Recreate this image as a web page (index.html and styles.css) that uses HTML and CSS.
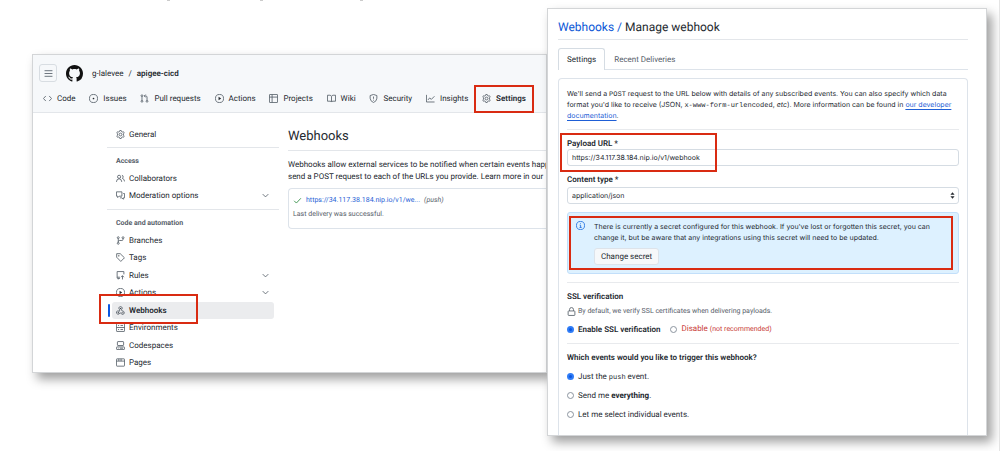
FILE: index.html
```
<!DOCTYPE html>
<html lang="en">
<head>
<meta charset="utf-8">
<title>Manage webhook</title>
<link rel="stylesheet" href="styles.css">
</head>
<body>
<svg class="defs" aria-hidden="true">
  <symbol id="menu" viewBox="0 0 16 16"><path d="M1 3h14M1 8h14M1 13h14"/></symbol>
  <symbol id="code" viewBox="0 0 16 16"><path d="M5 3.500L.8 8 5 12.500M11 3.500L15.200 8 11 12.500"/></symbol>
  <symbol id="issue" viewBox="0 0 16 16"><circle cx="8" cy="8" r="7.200"/><circle class="solid" cx="8" cy="8" r="1.500"/></symbol>
  <symbol id="pull" viewBox="0 0 16 16"><circle cx="3.500" cy="3" r="1.600"/><circle cx="3.500" cy="13" r="1.600"/><circle cx="12.500" cy="13" r="1.600"/><path d="M3.500 4.700v6.600M12.500 11.300V5.500q0-2-2-2H8M10 1L7.500 3.500 10 6"/></symbol>
  <symbol id="play" viewBox="0 0 16 16"><circle cx="8" cy="8" r="7.200"/><path class="solid" d="M6.300 5v6l4.700-3z"/></symbol>
  <symbol id="table" viewBox="0 0 16 16"><rect x=".8" y=".8" width="14.400" height="14.400" rx="1"/><path d="M.8 5.500h14.400M5.500.8v14.400"/></symbol>
  <symbol id="book" viewBox="0 0 16 16"><path d="M8 4q-1-1.800-3-1.800H.8v10.600H5.500q1.800 0 2.500 1.500.7-1.500 2.500-1.500h4.700V2.200H11Q9 2.200 8 4v10"/></symbol>
  <symbol id="shield" viewBox="0 0 16 16"><path d="M8 .8L14 2.800V7.500q0 5-6 7.700-6-2.700-6-7.700V2.800zM8 4.500v4M8 10.200v1.500"/></symbol>
  <symbol id="graph" viewBox="0 0 16 16"><path d="M.8 1.500v12.700h14.400M3.500 10.500L6.500 7l3 2.500L15 4"/></symbol>
  <symbol id="gear" viewBox="0 0 16 16"><path d="M6.800.8h2.400l.6 2 1.400.8 2-.6 1.400 2.200-1.400 1.600v2.400l1.400 1.600-1.400 2.200-2-.6-1.400.8-.6 2H6.800l-.6-2-1.400-.8-2 .6-1.400-2.200 1.400-1.600V6.800L1.400 5.200 2.800 3l2 .6 1.400-.8z"/><circle cx="8" cy="8" r="2.500"/></symbol>
  <symbol id="people" viewBox="0 0 16 16"><circle cx="5.500" cy="5" r="2.800"/><path d="M.8 14q.3-5.500 4.700-5.500T10.200 14M10.500 2.300q2.500.3 2.300 3.200-.3 1.500-1.600 2.200 3.600 1 4 5.500"/></symbol>
  <symbol id="comments" viewBox="0 0 16 16"><path d="M.8 1.500h9.700v7.700H5.500L3 11.700V9.200H.8zM12.800 4.500h2.400v7.700H13v2.500l-2.500-2.500H7"/></symbol>
  <symbol id="branch" viewBox="0 0 16 16"><circle cx="4" cy="3" r="1.700"/><circle cx="4" cy="13" r="1.700"/><circle cx="12.500" cy="3" r="1.700"/><path d="M4 4.700v6.600M12.500 4.700V6q0 2-2 2H6q-2 0-2 2"/></symbol>
  <symbol id="tag" viewBox="0 0 16 16"><path d="M1.200 1.200h6.300l7.500 7.300-6.500 6.500L1.200 7.500z"/><circle class="solid" cx="5" cy="5" r="1.200"/></symbol>
  <symbol id="rules" viewBox="0 0 16 16"><path d="M14 6V1H2v11.200q0 1 1 1h4M2 11h5M11.500 15V8.500M9 11l2.500-2.700L14 11M4 13.200V15"/></symbol>
  <symbol id="hook" viewBox="0 0 16 16"><path d="M5.500 5.500a3 3 0 1 1 5 .2M5.500 5.500L7 7l-3 5M5 8.800a3 3 0 1 0 1.700 3.700H11M8.200 4l2.900 5a3 3 0 1 1-1.500 5.100"/><circle class="solid" cx="8" cy="4" r="1"/><circle class="solid" cx="4" cy="12" r="1"/><circle class="solid" cx="12.200" cy="12" r="1"/></symbol>
  <symbol id="server" viewBox="0 0 16 16"><rect x=".8" y="1" width="14.400" height="14" rx="1"/><path d="M.8 8h14.400M3.500 4.500h2M8 4.500h4.500M3.500 11.500h2M8 11.500h4.500"/></symbol>
  <symbol id="codespace" viewBox="0 0 16 16"><rect x="2.500" y="1" width="11" height="7" rx="1"/><rect x=".8" y="10.500" width="14.400" height="4.500" rx="1"/><path d="M3.500 12.800h1M7 12.800h5.500"/></symbol>
  <symbol id="browser" viewBox="0 0 16 16"><rect x=".8" y="1.500" width="14.400" height="13" rx="1"/><path d="M.8 5.500h14.400M5 1.500v4M9 1.500v4"/></symbol>
  <symbol id="chevron" viewBox="0 0 16 16"><path d="M3 5.500L8 10.500l5-5"/></symbol>
  <symbol id="check" viewBox="0 0 16 16"><path d="M2 8.500L6 12.500 14 4"/></symbol>
  <symbol id="info" viewBox="0 0 16 16"><circle cx="8" cy="8" r="7.200"/><path d="M6.500 7.300H8.200v4.200M6.300 11.500h3.700M8 4v1.200"/></symbol>
  <symbol id="lock" viewBox="0 0 16 16"><rect x="2" y="7" width="12" height="8" rx="1"/><path d="M4.500 7V4.500a3.500 3.500 0 0 1 7 0V7"/></symbol>
  <symbol id="github" viewBox="0 0 16 16"><path class="solid" d="M8 0C3.580 0 0 3.580 0 8c0 3.540 2.290 6.530 5.470 7.590.4.070.55-.17.55-.38 0-.19-.01-.82-.01-1.490-2.010.37-2.530-.49-2.690-.94-.09-.23-.48-.94-.82-1.130-.28-.15-.68-.52-.01-.53.63-.01 1.080.58 1.230.82.72 1.210 1.870.87 2.330.66.07-.52.28-.87.51-1.070-1.780-.2-3.640-.89-3.640-3.950 0-.87.31-1.590.82-2.150-.08-.2-.36-1.020.08-2.120 0 0 .67-.21 2.200.82.64-.18 1.320-.27 2-.27s1.360.09 2 .27c1.530-1.040 2.200-.82 2.200-.82.44 1.100.16 1.920.08 2.120.51.56.82 1.270.82 2.150 0 3.070-1.870 3.750-3.650 3.950.29.25.54.73.54 1.480 0 1.070-.01 1.930-.01 2.200 0 .21.15.46.55.38A8.010 8.010 0 0 0 16 8c0-4.420-3.580-8-8-8z"/></symbol>
</svg>

<main class="stage">
  <svg class="specks" viewBox="0 0 200 1" aria-hidden="true"><path d="M0 0h3v1H0zM93 0h3v1h-3zM193 0h3v1h-3z"/></svg>
  <section class="window repo">
    <header class="repo-head">
      <div class="crumbs">
        <button class="menu-button" type="button" aria-label="Menu"><svg class="icon"><use href="#menu"/></svg></button>
        <svg class="logo"><use href="#github"/></svg>
        <span class="path"><a href="#">g-lalevee</a><span>/</span><a href="#" class="strong">apigee-cicd</a></span>
      </div>
      <nav class="repo-nav">
        <a href="#"><svg class="icon"><use href="#code"/></svg>Code</a>
        <a href="#"><svg class="icon"><use href="#issue"/></svg>Issues</a>
        <a href="#"><svg class="icon"><use href="#pull"/></svg>Pull requests</a>
        <a href="#"><svg class="icon"><use href="#play"/></svg>Actions</a>
        <a href="#"><svg class="icon"><use href="#table"/></svg>Projects</a>
        <a href="#"><svg class="icon"><use href="#book"/></svg>Wiki</a>
        <a href="#"><svg class="icon"><use href="#shield"/></svg>Security</a>
        <a href="#"><svg class="icon"><use href="#graph"/></svg>Insights</a>
        <a href="#" class="strong marked"><svg class="icon"><use href="#gear"/></svg>Settings<span class="mark mark-settings"></span></a>
      </nav>
    </header>
    <div class="repo-body">
      <nav class="side">
        <ul>
          <li><a href="#"><svg class="icon"><use href="#gear"/></svg>General</a></li>
        </ul>
        <h3>Access</h3>
        <ul>
          <li><a href="#"><svg class="icon"><use href="#people"/></svg>Collaborators</a></li>
          <li><a href="#"><svg class="icon"><use href="#comments"/></svg>Moderation options<svg class="icon chevron"><use href="#chevron"/></svg></a></li>
        </ul>
        <h3>Code and automation</h3>
        <ul class="long">
          <li><a href="#"><svg class="icon"><use href="#branch"/></svg>Branches</a></li>
          <li><a href="#"><svg class="icon"><use href="#tag"/></svg>Tags</a></li>
          <li><a href="#"><svg class="icon"><use href="#rules"/></svg>Rules<svg class="icon chevron"><use href="#chevron"/></svg></a></li>
          <li><a href="#"><svg class="icon"><use href="#play"/></svg>Actions<svg class="icon chevron"><use href="#chevron"/></svg></a></li>
          <li class="marked"><a href="#" class="current"><svg class="icon"><use href="#hook"/></svg>Webhooks</a><span class="mark mark-hooks"></span></li>
          <li><a href="#"><svg class="icon"><use href="#server"/></svg>Environments</a></li>
          <li><a href="#"><svg class="icon"><use href="#codespace"/></svg>Codespaces</a></li>
          <li><a href="#"><svg class="icon"><use href="#browser"/></svg>Pages</a></li>
        </ul>
      </nav>
      <div class="hooks">
        <h2>Webhooks</h2>
        <p>Webhooks allow external services to be notified when certain events happ<br>send a POST request to each of the URLs you provide. Learn more in our</p>
        <div class="hook-card">
          <div class="hook-line"><svg class="icon check"><use href="#check"/></svg><a href="#">https://34.117.38.184.nip.io/v1/we...</a><em>(push)</em></div>
          <div>Last delivery was successful.</div>
        </div>
      </div>
    </div>
  </section>

  <section class="window manage">
    <h1><a href="#">Webhooks /</a> Manage webhook</h1>
    <nav class="tabs"><a href="#" class="active">Settings</a><a href="#">Recent Deliveries</a></nav>
    <form class="panel">
      <p class="intro compact">We'll send a <code>POST</code> request to the URL below with details of any subscribed events. You can also specify which data format you'd like to receive (JSON, <code>x-www-form-urlencoded</code>, <i>etc</i>). More information can be found in <a href="#">our developer documentation</a>.</p>
      <div class="field marked">
        <label for="url">Payload URL *</label>
        <input id="url" class="compact" type="text" value="https://34.117.38.184.nip.io/v1/webhook">
        <span class="mark mark-url"></span>
      </div>
      <div class="field">
        <label for="type">Content type *</label>
        <div class="select">
          <select id="type" class="compact"><option>application/json</option></select>
          <svg class="arrows" viewBox="0 0 6 8"><path class="solid" d="M3 0l2.500 3h-5zM3 8L.5 5h5z"/></svg>
        </div>
      </div>
      <div class="notice marked">
        <svg class="icon"><use href="#info"/></svg>
        <div>
          <p class="compact">There is currently a secret configured for this webhook. If you've lost or forgotten this secret, you can change it, but be aware that any integrations using this secret will need to be updated.</p>
          <button type="button">Change secret</button>
        </div>
        <span class="mark mark-secret"></span>
      </div>
      <fieldset class="ssl">
        <legend>SSL verification</legend>
        <p class="hint"><svg class="icon"><use href="#lock"/></svg>By default, we verify SSL certificates when delivering payloads.</p>
        <div class="choices">
          <label class="strong"><input type="radio" name="ssl" checked>Enable SSL verification</label>
          <label class="danger"><input type="radio" name="ssl"><span>Disable <small>(not recommended)</small></span></label>
        </div>
      </fieldset>
      <fieldset class="events">
        <legend>Which events would you like to trigger this webhook?</legend>
        <label><input type="radio" name="events" checked><span>Just the <code>push</code> event.</span></label>
        <label><input type="radio" name="events"><span>Send me <b>everything</b>.</span></label>
        <label><input type="radio" name="events"><span>Let me select individual events.</span></label>
      </fieldset>
    </form>
  </section>
</main>
</body>
</html>
```
FILE: styles.css
```
* { box-sizing: border-box; }
body {
  margin: 0;
  background: #fff;
  color: #24292f;
  font: 8px/11px Roboto, "Liberation Sans", sans-serif;
  text-rendering: geometricPrecision;
}
h1, h2, h3, p, ul, fieldset { margin: 0; padding: 0; border: 0; }
ul { list-style: none; }
a { color: inherit; text-decoration: none; }
code { font: 7px/1 "Liberation Mono", monospace; }
button, input, select { font: inherit; color: inherit; text-rendering: inherit; }
.defs { position: absolute; width: 0; height: 0; }
.icon { flex: none; width: 9px; height: 9px; fill: none; stroke: #57606a; stroke-width: 1.5px; }
.solid { fill: currentColor; stroke: none; }
.strong { font-weight: 600; }

.stage {
  position: relative;
  display: flex;
  align-items: flex-start;
  min-height: 451px;
  padding: 8px 12px 0 32px;
  border-right: 1px solid #e4e4e4;
  overflow: hidden;
}
.specks { position: absolute; top: 0; left: 167px; width: 200px; height: 1px; fill: #ccc; }
.window {
  border: 1px solid #d3d5d7;
  background: #fff;
  box-shadow: 5px 6px 10px rgba(0, 0, 0, .38);
}
.repo { flex: 1; min-width: 0; margin-top: 46px; }
.manage { position: relative; z-index: 1; width: 440px; flex: none; padding: 0 18px 0 10px; }

.marked { position: relative; }
.mark { position: absolute; border: 2px solid #d92b12; pointer-events: none; }
.mark-settings { inset: -7px -8px -8px -8px; }
.mark-hooks { inset: -8px 76px -5px -13px; }
.mark-url { inset: -5px 242px -6px -7px; }
.mark-secret { inset: 3px 5px 3px 1px; }

.repo-head { background: #f6f8fa; border-bottom: 1px solid #e3e6ea; }
.crumbs { display: flex; align-items: center; gap: 9px; padding: 9px 6px 0; }
.menu-button {
  display: grid;
  place-items: center;
  width: 18px;
  height: 18px;
  padding: 0;
  border: 1px solid #d8dde2;
  border-radius: 3px;
  background: none;
}
.logo { width: 17px; height: 17px; color: #111; }
.path { display: flex; gap: 5px; }
.repo-nav { display: flex; justify-content: space-between; padding: 10px 20px 7px 10px; white-space: nowrap; }
.repo-nav a { display: flex; align-items: center; gap: 5px; height: 13px; }

.repo-body { display: flex; gap: 9px; padding-left: 74px; overflow: hidden; }
.side { flex: none; width: 172px; }
.side ul { padding: 0 5px; }
.side > ul:first-child { padding-top: 13px; }
.side h3 {
  margin-top: 4px;
  padding: 8px 9px 3px;
  border-top: 1px solid #e3e6ea;
  color: #57606a;
  font-size: 7px;
  line-height: 11px;
}
.side a { display: flex; align-items: center; gap: 4px; height: 17px; padding: 0 4px; border-radius: 3px; }
.side ul + h3 + ul { padding-bottom: 1px; }
.side .long { display: flex; flex-direction: column; justify-content: space-between; min-height: 140px; }
.side .current { background: #ebecee; font-weight: 600; }
.side .current::before {
  content: "";
  position: absolute;
  left: -4px;
  width: 2px;
  height: 13px;
  border-radius: 1px;
  background: #0b57e0;
}
.chevron { margin-left: auto; }

.hooks { flex: 1; min-width: 0; white-space: nowrap; }
.hooks h2 { padding: 16px 0 5px; border-bottom: 1px solid #e3e6ea; font-size: 13px; line-height: 16px; font-weight: 400; }
.hooks p { padding: 8px 0 5px; line-height: 12px; }
.hook-card {
  padding: 6px 4px 8px;
  border: 1px solid #dde3ea;
  border-right: 0;
  border-radius: 4px 0 0 4px;
  color: #57606a;
  font-size: 7px;
  line-height: 11px;
}
.hook-line { display: flex; align-items: center; gap: 4px; padding-bottom: 3px; }
.hook-line a { color: #1f5fd6; }
.hook-line .check { stroke: #2b8a3e; }

.manage h1 { padding: 10px 0 4px; border-bottom: 1px solid #e3e6ea; font-size: 12px; line-height: 16px; font-weight: 400; }
.manage h1 a { color: #0b57d6; }
.tabs { display: flex; margin-top: 8px; border-bottom: 1px solid #dde3ea; color: #57606a; }
.tabs a { padding: 5px 8px 4px; border: 1px solid transparent; border-bottom: 0; }
.tabs .active { margin-bottom: -1px; border-color: #d5dce3; border-radius: 3px 3px 0 0; background: #fff; color: #24292f; }
.panel { margin-top: 8px; padding: 9px 8px 15px; border: 1px solid #dde3ea; border-bottom: 0; border-radius: 4px 4px 0 0; }
.panel .compact { font-family: Inter, sans-serif; font-size: 7px; }
.intro { padding-bottom: 8px; border-bottom: 1px solid #e8eaed; }
.intro a { color: #1f5fd6; text-decoration: underline; text-underline-offset: 2px; }
.field { margin-top: 8px; }
.field label { display: block; font-weight: 600; }
.field input, .field select {
  display: block;
  width: 100%;
  height: 17px;
  padding: 0 4px;
  border: 1px solid #d5dce3;
  border-radius: 3px;
  background: #fff;
  appearance: none;
}
.select { position: relative; padding-top: 2px; }
.arrows { position: absolute; right: 4px; top: 7px; width: 5px; height: 7px; }
.notice {
  display: flex;
  gap: 9px;
  margin: 8px 0;
  padding: 8px;
  border: 1px solid #c2dffa;
  border-radius: 3px;
  background: #ddf1ff;
}
.notice .icon { stroke: #1f6fe0; }
.notice button { margin-top: 5px; height: 17px; padding: 0 6px; border: 1px solid #dde3ea; border-radius: 3px; background: #f6f8fa; }
.ssl { padding: 8px 0 8px; border: solid #e8eaed; border-width: 1px 0; }
legend { float: left; width: 100%; padding: 0; font-weight: 600; }
legend + * { clear: both; }
.hint { display: flex; align-items: center; gap: 2px; padding-top: 4px; color: #57606a; font-size: 7px; }
.choices { display: flex; gap: 10px; padding-top: 6px; }
.choices label, .events label { display: flex; align-items: center; gap: 4px; }
input[type="radio"] {
  appearance: none;
  flex: none;
  width: 7px;
  height: 7px;
  margin: 0;
  border: 1px solid #8c959f;
  border-radius: 50%;
  background: #fff;
}
input[type="radio"]:checked { border: 2px solid #2f7cf6; background: #0b57e0; }
.danger { color: #c93c37; }
small { font-size: 7px; }
.events { padding-top: 8px; }
.events label { padding-top: 8px; }
```
